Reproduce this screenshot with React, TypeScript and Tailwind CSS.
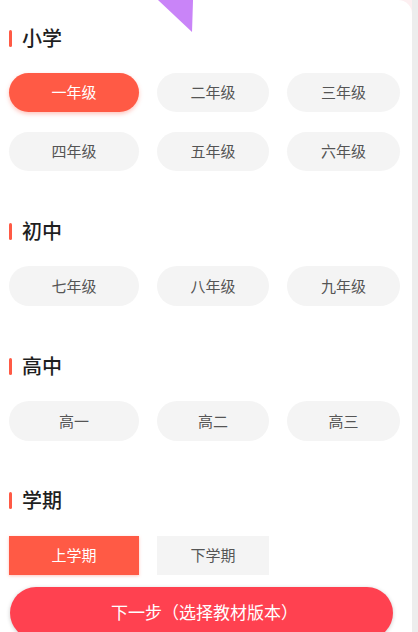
import { useState } from 'react';

const primary = ['一年级', '二年级', '三年级', '四年级', '五年级', '六年级'];
const middle = ['七年级', '八年级', '九年级'];
const high = ['高一', '高二', '高三'];
const widths = ['w-[130px]', 'w-[112px]', 'w-[113px]'];

const SectionTitle = ({ title }: { title: string }) => (
  <div className="flex items-center h-[18px]">
    <span className="w-[3px] h-[17px] rounded-full bg-[#ff5a45]" />
    <span className="ml-[10px] text-[20px] leading-none font-medium text-[#1f1f1f]">{title}</span>
  </div>
);

const GradeButton = ({
  label,
  active,
  width,
  height,
  onClick,
}: {
  label: string;
  active: boolean;
  width: string;
  height: string;
  onClick: () => void;
}) => (
  <button
    onClick={onClick}
    className={`${width} ${height} rounded-full text-[15px] ${
      active
        ? 'bg-[#ff5a45] text-white shadow-[0_2px_4px_rgba(255,90,69,0.35)]'
        : 'bg-[#f4f4f4] text-[#555555]'
    }`}
  >
    {label}
  </button>
);

export default function App() {
  const [grade, setGrade] = useState('一年级');
  const [term, setTerm] = useState('上学期');

  const row = (items: string[], height: string) => (
    <div className="flex gap-[18px]">
      {items.map((g, i) => (
        <GradeButton
          key={g}
          label={g}
          active={grade === g}
          width={widths[i]}
          height={height}
          onClick={() => setGrade(g)}
        />
      ))}
    </div>
  );

  return (
    <div
      className="w-[418px] h-[632px] overflow-hidden flex bg-[#ededed]"
      style={{ fontFamily: '"Noto Sans CJK SC", "Noto Sans", sans-serif' }}
    >
      <div className="w-[412px] h-full bg-[#fdeff1]">
        <div className="relative w-full h-full bg-white rounded-tr-[14px] pl-[9px] pt-[29px]">
          {/* decorative triangle */}
          <svg className="absolute left-[150px] top-0" width="50" height="34" viewBox="0 0 50 34">
            <polygon points="8,0 43,0 42,32" fill="#c984f8" />
          </svg>

          <SectionTitle title="小学" />
          <div className="mt-[26px] flex flex-col gap-[20px]">
            {row(primary.slice(0, 3), 'h-[39px]')}
            {row(primary.slice(3), 'h-[39px]')}
          </div>

          <div className="mt-[51px]">
            <SectionTitle title="初中" />
          </div>
          <div className="mt-[26px]">{row(middle, 'h-[40px]')}</div>

          <div className="mt-[51px]">
            <SectionTitle title="高中" />
          </div>
          <div className="mt-[26px]">{row(high, 'h-[40px]')}</div>

          <div className="mt-[50px]">
            <SectionTitle title="学期" />
          </div>
          <div className="mt-[27px] flex gap-[18px]">
            {['上学期', '下学期'].map((t, i) => (
              <button
                key={t}
                onClick={() => setTerm(t)}
                className={`${widths[i]} h-[39px] text-[15px] ${
                  term === t
                    ? 'bg-[#ff5a45] text-white shadow-[0_1px_3px_rgba(255,90,69,0.35)]'
                    : 'bg-[#f4f4f4] text-[#555555]'
                }`}
              >
                {t}
              </button>
            ))}
          </div>

          <button className="mt-[12px] ml-[1px] w-[383px] h-[52px] rounded-full bg-[#ff4150] text-white text-[17px] shadow-[0_1px_4px_rgba(0,0,0,0.2)] pb-[3px] pl-[6px]">
            下一步（选择教材版本）
          </button>
        </div>
      </div>
      <div className="w-[6px] h-full bg-[#ededed]" />
    </div>
  );
}
